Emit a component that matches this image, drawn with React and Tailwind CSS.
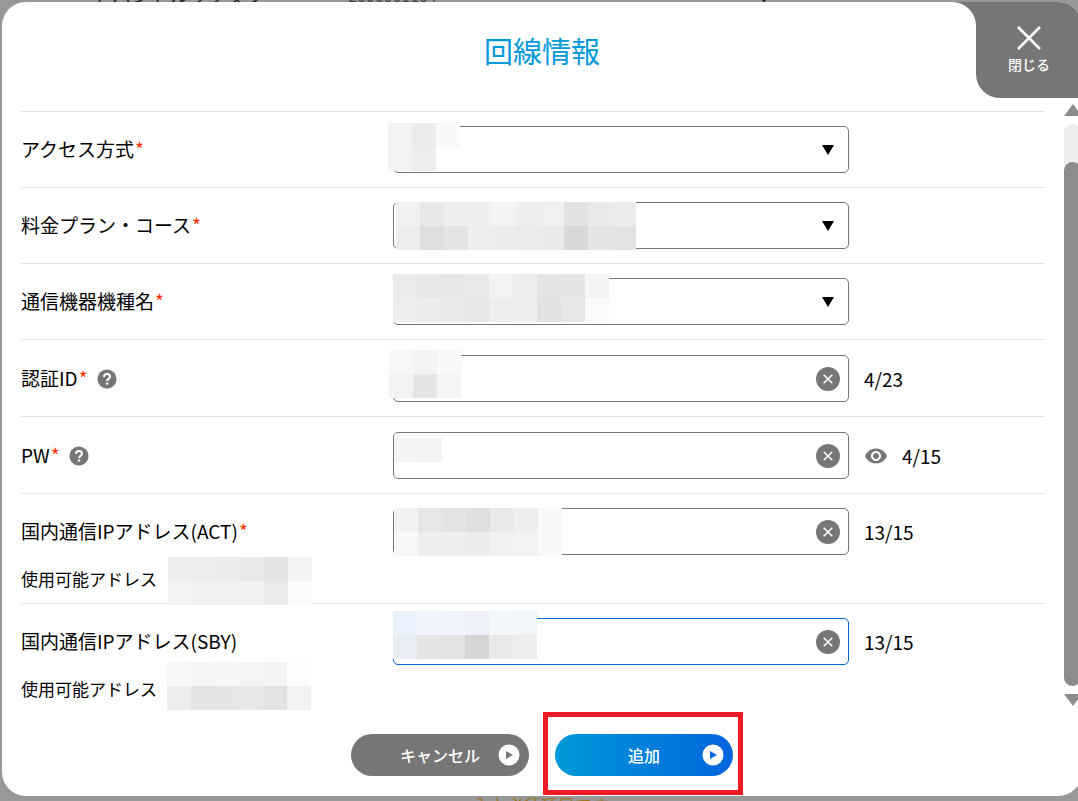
import { useState } from 'react'
import { MdVisibility } from 'react-icons/md'

const CELL = 24

const FIELDS = [
  {
    id: 'access',
    label: 'アクセス方式',
    required: true,
    type: 'select',
    mask: {
      position: '-left-[5px] -top-[3px]',
      rows: [['#f3f3f3', '#ececec', '#f9f9f9'], ['#f3f3f3', '#ededed']],
    },
  },
  {
    id: 'plan',
    label: '料金プラン・コース',
    required: true,
    type: 'select',
    mask: {
      position: 'left-[3px] top-0',
      rows: [
        ['#f1f1f1', '#e7e7e7', '#efefef', '#efefef', '#f4f4f4', '#eeeeee', '#f0f0f0', '#e2e2e2', '#eaeaea', '#ececec'],
        ['#ededed', '#dedede', '#e5e5e5', '#eeeeee', '#ececec', '#ebebeb', '#eaeaea', '#d8d8d8', '#e5e5e5', '#e3e3e3'],
      ],
    },
  },
  {
    id: 'device',
    label: '通信機器機種名',
    required: true,
    type: 'select',
    mask: {
      position: 'left-0 -top-[4px]',
      rows: [
        ['#ebebeb', '#e7e7e7', '#e6e6e6', '#e8e8e8', '#f2f2f2', '#ededed', '#e4e4e4', '#e5e5e5', '#f4f4f4'],
        ['#eeeeee', '#ececec', '#e9e9e9', '#e7e7e7', '#eeeeee', '#efefef', '#e1e1e1', '#e7e7e7', '#fafafa'],
      ],
    },
  },
  {
    id: 'auth-id',
    label: '認証ID',
    required: true,
    help: true,
    type: 'text',
    count: '4/23',
    mask: {
      position: '-left-[4px] -top-[5px]',
      rows: [['#f7f7f7', '#f3f3f3', '#f9f9f9'], ['#f3f3f3', '#e5e5e5', '#f5f5f5']],
    },
  },
  {
    id: 'pw',
    label: 'PW',
    required: true,
    help: true,
    type: 'password',
    count: '4/15',
    mask: {
      position: 'left-px top-[6px]',
      rows: [['#f4f4f4', '#f3f3f3']],
    },
  },
  {
    id: 'ip-act',
    label: '国内通信IPアドレス(ACT)',
    required: true,
    type: 'text',
    count: '13/15',
    mask: {
      position: 'left-px top-0',
      rows: [
        ['#f1f1f1', '#e7e7e7', '#e4e4e4', '#e0e0e0', '#eaeaea', '#eeeeee', '#f9f9f9'],
        ['#f7f7f7', '#eeeeee', '#eeeeee', '#ececec', '#f1f1f1', '#f3f3f3', '#f9f9f9'],
      ],
    },
    available: {
      position: 'left-0 -top-[10px]',
      rows: [
        ['#eeeeee', '#ededed', '#ebebeb', '#e9e9e9', '#e5e5e5', '#f4f4f4'],
        ['#f2f2f2', '#f0f0f0', '#f1f1f1', '#f1f1f1', '#ebebeb', '#fbfbfb'],
      ],
    },
  },
  {
    id: 'ip-sby',
    label: '国内通信IPアドレス(SBY)',
    type: 'text',
    active: true,
    count: '13/15',
    mask: {
      position: 'left-0 -top-[7px]',
      rows: [
        ['#eaf3fd', '#f0f5fb', '#eff4fa', '#edf1f7', '#f2f7fc', '#f1f6fa'],
        ['#e9eef4', '#e5e5e5', '#e3e3e3', '#d6d6d6', '#e9e9e9', '#eeeeee'],
      ],
    },
    available: {
      position: '-left-px -top-[15px]',
      rows: [
        ['#f7f7f7', '#f5f5f5', '#f6f6f6', '#f5f5f5', '#f3f3f3', '#fcfcfc'],
        ['#ededed', '#e5e5e5', '#e5e5e5', '#e7e7e7', '#e3e3e3', '#f2f2f2'],
      ],
    },
  },
]

function Mask({ position, rows }) {
  return (
    <div className={`pointer-events-none absolute z-10 ${position}`} aria-hidden="true">
      {rows.map((cells, i) => (
        <div key={i} className="flex">
          {cells.map((color, j) => (
            <span key={j} className="shrink-0" style={{ width: CELL, height: CELL, backgroundColor: color }} />
          ))}
        </div>
      ))}
    </div>
  )
}

function HelpIcon() {
  return (
    <svg viewBox="0 0 20 20" className="h-5 w-5">
      <circle cx="10" cy="10" r="9.6" fill="#767676" />
      <path
        d="M7 7.9C7 6 8.3 5 10 5s3 1 3 2.6c0 2.2-2.9 2.3-2.9 4.4"
        fill="none"
        stroke="#fff"
        strokeWidth="2"
      />
      <circle cx="10.1" cy="14.6" r="1.25" fill="#fff" />
    </svg>
  )
}

function ClearButton({ onClick }) {
  return (
    <button
      type="button"
      aria-label="クリア"
      onClick={onClick}
      className="absolute right-[9px] top-3 h-6 w-6 rounded-full bg-[#767676]"
    >
      <svg viewBox="0 0 24 24" className="h-6 w-6" fill="none" stroke="#fff" strokeWidth="1.5">
        <path d="M7.7 7.7l8.6 8.6M16.3 7.7l-8.6 8.6" />
      </svg>
    </button>
  )
}

function rowPadding(field) {
  if (field.available) return 'pt-[14px] pb-3'
  if (field.type === 'select') return 'py-[14px]'
  return 'pt-[15px] pb-[14px]'
}

function Field({ field }) {
  const [value, setValue] = useState('')
  const [visible, setVisible] = useState(false)
  const border = field.active ? 'border-[#0068d9]' : 'border-[#767676]'

  return (
    <div className={`border-t border-[#e6e6e6] ${rowPadding(field)}`}>
      <div className="flex items-center">
        <div className="flex w-[372px] shrink-0 items-center">
          <label htmlFor={field.id} className="pb-px text-[19px] leading-7">
            {field.label}
            {field.required && <span className="ml-px text-[#ff3300]">*</span>}
          </label>
          {field.help && (
            <button type="button" aria-label="ヘルプ" className="ml-[9px]">
              <HelpIcon />
            </button>
          )}
        </div>

        <div className="relative w-full max-w-[456px]">
          {field.type === 'select' ? (
            <>
              <select
                id={field.id}
                value={value}
                onChange={(e) => setValue(e.target.value)}
                className={`block h-[47px] w-full appearance-none rounded-[5px] border bg-white px-3 ${border}`}
              >
                <option value=""></option>
              </select>
              <svg viewBox="0 0 12 10" className="pointer-events-none absolute right-[15px] top-[19px] h-[10px] w-3">
                <path d="M0 0h12L6 10z" />
              </svg>
            </>
          ) : (
            <>
              <input
                id={field.id}
                type={field.type === 'password' && !visible ? 'password' : 'text'}
                value={value}
                onChange={(e) => setValue(e.target.value)}
                className={`block h-[47px] w-full rounded-[5px] border bg-white pl-3 pr-10 text-[19px] outline-none ${border}`}
              />
              <ClearButton onClick={() => setValue('')} />
            </>
          )}
          <Mask {...field.mask} />
        </div>

        {field.count && (
          <div className="ml-[15px] flex shrink-0 items-center gap-[14px] text-[19px] leading-7">
            {field.type === 'password' && (
              <button type="button" aria-label="表示" onClick={() => setVisible(!visible)} className="text-[#767676]">
                <MdVisibility size={24} />
              </button>
            )}
            <span>{field.count}</span>
          </div>
        )}
      </div>

      {field.available && (
        <div className="mt-3 flex items-center text-[17px] leading-6">
          <span>使用可能アドレス</span>
          <span className="relative ml-[11px] h-6 w-36">
            <Mask {...field.available} />
          </span>
        </div>
      )}
    </div>
  )
}

function PillButton({ children, className, iconColor }) {
  return (
    <button
      type="button"
      className={`relative h-[42px] w-[178px] rounded-full text-center text-base font-medium text-white ${className}`}
    >
      {children}
      <svg viewBox="0 0 22 22" className="absolute inset-y-0 right-[9px] my-auto h-[22px] w-[22px]">
        <circle cx="11" cy="11" r="10.5" fill="#fff" />
        <path d="M8 7l7 4-7 4z" fill={iconColor} />
      </svg>
    </button>
  )
}

function ScrollBar() {
  return (
    <div className="flex w-[18px] shrink-0 flex-col" aria-hidden="true">
      <svg viewBox="0 0 18 12" className="mt-[6px] h-3 w-[18px] shrink-0" fill="#8c8c8c">
        <path d="M0 12h18L9 0z" />
      </svg>
      <div className="mt-2 flex w-[17px] flex-1 flex-col rounded-full bg-[#eeeeee] pt-[38px]">
        <div className="flex-1 rounded-full bg-[#8c8c8c]" />
      </div>
      <svg viewBox="0 0 18 12" className="mt-2 mb-[7px] h-3 w-[18px] shrink-0" fill="#8c8c8c">
        <path d="M0 0h18L9 12z" />
      </svg>
    </div>
  )
}

export default function App() {
  return (
    <div
      lang="ja"
      className="flex min-h-screen flex-col overflow-hidden bg-[#979899] font-['Noto_Sans_CJK_JP','Noto_Sans',sans-serif] text-black"
    >
      {/* Page behind the dialog */}
      <div className="flex h-[2px] items-end overflow-hidden pl-[93px] text-[19px] leading-[14px] text-[#222]" aria-hidden="true">
        <span className="flex w-[255px] shrink-0 items-end whitespace-nowrap">
          ドバンドルック契プ<span className="leading-[2px] text-[#d0452f]">*</span>
        </span>
        <span className="text-base leading-[14px] text-[#444]">2000001104</span>
        <span className="ml-auto mr-[306px] text-base leading-[14px]">▼</span>
      </div>

      <div role="dialog" aria-labelledby="dialog-title" className="-mr-1 ml-0.5 overflow-hidden rounded-[24px] bg-white">
        <header className="flex h-24">
          <div className="flex-1 bg-[#767676]">
            <div className="h-full rounded-tr-[24px] bg-white pl-[106px] pt-[26px] text-center">
              <h2 id="dialog-title" className="text-[29px] leading-[44px] text-[#0099d9]">回線情報</h2>
            </div>
          </div>
          <button
            type="button"
            className="flex w-[106px] shrink-0 flex-col items-center rounded-bl-[24px] bg-[#767676] pt-6 text-sm font-medium text-white"
          >
            <svg viewBox="0 0 24 24" className="mb-1 h-6 w-6" fill="none" stroke="#fff" strokeWidth="2.6">
              <path d="M1 1l22 22M23 1L1 23" />
            </svg>
            閉じる
          </button>
        </header>

        <div className="flex">
          <form className="flex-1 px-[19px] pt-[13px]">
            {FIELDS.map((field) => (
              <Field key={field.id} field={field} />
            ))}
          </form>
          <ScrollBar />
        </div>

        <footer className="flex justify-center gap-[26px] pb-5 pt-[21px]">
          <PillButton className="bg-[#767676]" iconColor="#767676">キャンセル</PillButton>
          <div className="relative">
            <PillButton className="bg-linear-to-r from-[#0099d9] to-[#0064dc]" iconColor="#0068d9">追加</PillButton>
            <div className="pointer-events-none absolute -bottom-[19px] -left-3 -right-[10px] -top-[22px] border-[5px] border-[#ed1c24]" />
          </div>
        </footer>
      </div>

      <div className="h-[5px] overflow-hidden pl-1 pt-px text-center text-[17px] leading-[16px] text-[#9a7420]" aria-hidden="true">
        入力必須項目です
      </div>
    </div>
  )
}
